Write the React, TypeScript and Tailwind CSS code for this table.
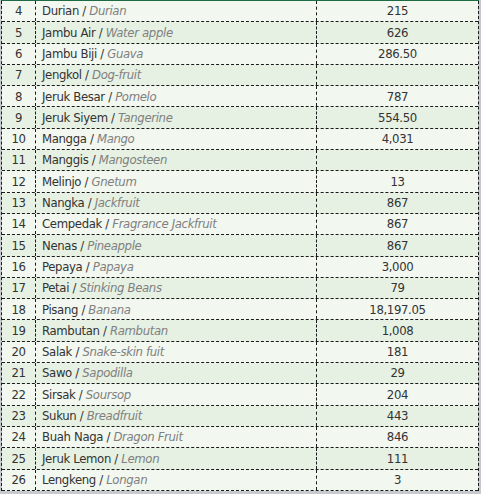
import React from "react";

const rows: [number, string, string, string][] = [
  [4, "Durian", "Durian", "215"],
  [5, "Jambu Air", "Water apple", "626"],
  [6, "Jambu Biji", "Guava", "286.50"],
  [7, "Jengkol", "Dog-fruit", ""],
  [8, "Jeruk Besar", "Pomelo", "787"],
  [9, "Jeruk Siyem", "Tangerine", "554.50"],
  [10, "Mangga", "Mango", "4,031"],
  [11, "Manggis", "Mangosteen", ""],
  [12, "Melinjo", "Gnetum", "13"],
  [13, "Nangka", "Jackfruit", "867"],
  [14, "Cempedak", "Fragrance Jackfruit", "867"],
  [15, "Nenas", "Pineapple", "867"],
  [16, "Pepaya", "Papaya", "3,000"],
  [17, "Petai", "Stinking Beans", "79"],
  [18, "Pisang", "Banana", "18,197.05"],
  [19, "Rambutan", "Rambutan", "1,008"],
  [20, "Salak", "Snake-skin fuit", "181"],
  [21, "Sawo", "Sapodilla", "29"],
  [22, "Sirsak", "Soursop", "204"],
  [23, "Sukun", "Breadfruit", "443"],
  [24, "Buah Naga", "Dragon Fruit", "846"],
  [25, "Jeruk Lemon", "Lemon", "111"],
  [26, "Lengkeng", "Longan", "3"],
];

export default function App() {
  return (
    <div className="w-[481px] h-[494px] overflow-hidden bg-[#c6cacf] font-['DejaVu_Sans_Condensed',sans-serif] text-[13px] tracking-[-0.35px] text-[#333]">
      <div className="w-[479px] pl-px">
        <div className="h-px bg-[#1d6a45]" />
        <div className="border-l border-r border-dashed border-[#1a1a1a]">
          {rows.map(([no, id, en, val], i) => (
            <div
              key={no}
              className={`grid grid-cols-[34px_281px_1fr] h-[21.3px] border-b border-dashed border-[#1a1a1a] ${
                i % 2 === 0 ? "bg-[#f2f7f0]" : "bg-[#e6f1e3]"
              }`}
            >
              <div className="flex items-center justify-center border-r border-dashed border-[#1a1a1a]">
                {no}
              </div>
              <div className="flex items-center pl-[6px] border-r border-dashed border-[#1a1a1a] whitespace-nowrap">
                {id} /&nbsp;<span className="italic text-[#808080]">{en}</span>
              </div>
              <div className="flex items-center justify-center">{val}</div>
            </div>
          ))}
        </div>
      </div>
    </div>
  );
}
